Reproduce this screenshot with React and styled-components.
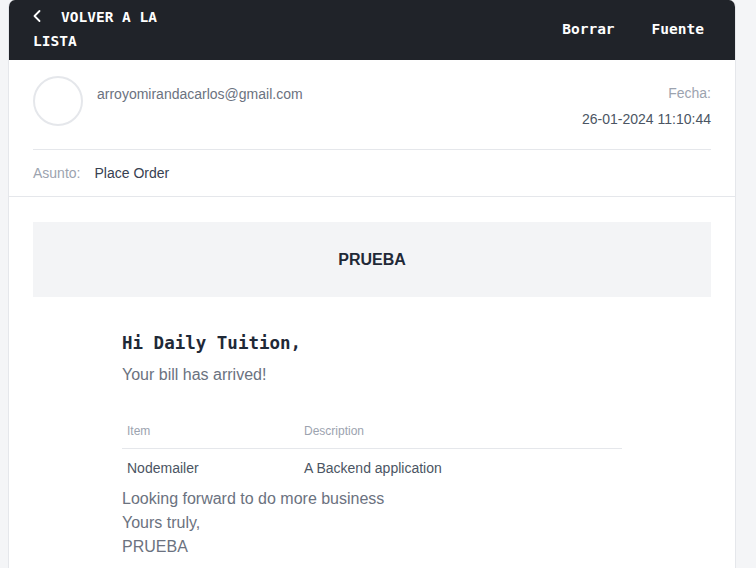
import styled, { createGlobalStyle } from "styled-components";
import { ChevronLeft } from "lucide-react";

const GlobalStyle = createGlobalStyle`
    body{
        margin: 0;
        background-color: #F4F5F7;
        font-family: "Liberation Sans", Arial, sans-serif;
    }
`;

export default function App () {
    return(
        <>
            <GlobalStyle/>
            <Page>
                <Card>
                    <TopBar>
                        <BackLink>
                            <ChevronLeft size={20} strokeWidth={2.2} />
                            VOLVER A LA LISTA
                        </BackLink>
                        <Actions>
                            <ActionButton>Borrar</ActionButton>
                            <ActionButton>Fuente</ActionButton>
                        </Actions>
                    </TopBar>
                    <Info>
                        <MetaRow>
                            <Sender>
                                <Avatar/>
                                <p>arroyomirandacarlos@gmail.com</p>
                            </Sender>
                            <DateBox>
                                <span className="label">Fecha:</span>
                                <span className="value">26-01-2024 11:10:44</span>
                            </DateBox>
                        </MetaRow>
                        <Subject>
                            <span className="label">Asunto:</span>
                            <span>Place Order</span>
                        </Subject>
                    </Info>
                    <Body>
                        <Banner>PRUEBA</Banner>
                        <Mail>
                            <h2>Hi Daily Tuition,</h2>
                            <p>Your bill has arrived!</p>
                            <Table>
                                <thead>
                                    <tr>
                                        <th className="first">Item</th>
                                        <th>Description</th>
                                    </tr>
                                </thead>
                                <tbody>
                                    <tr>
                                        <td>Nodemailer</td>
                                        <td>A Backend application</td>
                                    </tr>
                                </tbody>
                            </Table>
                            <Outro>
                                Looking forward to do more business<br/>
                                Yours truly,<br/>
                                PRUEBA
                            </Outro>
                        </Mail>
                    </Body>
                </Card>
            </Page>
        </>
    )
}

const Page = styled.div`
    padding: 0 20px 0 8px;
    min-height: 568px;
    box-sizing: border-box;
`;

const Card = styled.div`
    width: 728px;
    min-height: 568px;
    box-sizing: border-box;
    background-color: #FFFFFF;
    border: 1px solid #E5E7EB;
    border-top: 0;
    border-radius: 7px 7px 0 0;
    overflow: hidden;
`;

const TopBar = styled.div`
    height: 60px;
    box-sizing: border-box;
    background-color: #202329;
    display: flex;
    justify-content: space-between;
    align-items: flex-start;
    padding: 5px 31px 0 24px;
    font-family: "DejaVu Sans Mono", "Liberation Mono", monospace;
    font-weight: 700;
    font-size: 14.5px;
    color: #FFFFFF;
`;

const BackLink = styled.div`
    width: 140px;
    line-height: 24px;
    cursor: pointer;

    svg{
        vertical-align: -4px;
        margin-left: -6px;
        margin-right: 14px;
    }
`;

const Actions = styled.div`
    display: flex;
    gap: 37px;
    height: 48px;
    align-items: center;
`;

const ActionButton = styled.span`
    cursor: pointer;
`;

const Info = styled.div`
    padding: 0 24px;
    border-bottom: 1px solid #E5E7EB;
`;

const MetaRow = styled.div`
    height: 90px;
    box-sizing: border-box;
    padding-top: 16px;
    display: flex;
    justify-content: space-between;
    border-bottom: 1px solid #E5E7EB;
`;

const Sender = styled.div`
    display: flex;
    gap: 14px;
    align-items: flex-start;

    p{
        margin: 8px 0 0;
        font-size: 14px;
        line-height: 20px;
        color: #6B7280;
    }
`;

const Avatar = styled.div`
    width: 50px;
    height: 50px;
    box-sizing: border-box;
    border-radius: 50%;
    border: 2px solid #E5E7EB;
`;

const DateBox = styled.div`
    display: flex;
    flex-direction: column;
    align-items: flex-end;
    padding-top: 7px;
    font-size: 14px;
    line-height: 20px;

    .label{
        color: #9CA3AF;
    }
    .value{
        margin-top: 6px;
        color: #4B5563;
    }
`;

const Subject = styled.div`
    height: 46px;
    display: flex;
    align-items: center;
    gap: 14px;
    font-size: 14px;
    color: #374151;

    .label{
        color: #9CA3AF;
    }
`;

const Body = styled.div`
    padding: 25px 24px;
`;

const Banner = styled.div`
    height: 75px;
    background-color: #F3F4F6;
    display: flex;
    align-items: center;
    justify-content: center;
    font-weight: 700;
    font-size: 16px;
    color: #1F2937;
`;

const Mail = styled.div`
    width: 500px;
    margin: 0 auto;

    h2{
        margin: 34px 0 8px;
        font-family: "DejaVu Sans Mono", "Liberation Mono", monospace;
        font-size: 17.5px;
        line-height: 24px;
        font-weight: 700;
        color: #1F2937;
    }

    p{
        margin: 0;
        font-size: 16px;
        line-height: 24px;
        color: #6B7280;
    }
`;

const Table = styled.table`
    width: 100%;
    margin-top: 27px;
    border-collapse: collapse;
    text-align: left;

    th{
        padding: 8px 5px;
        font-size: 12px;
        line-height: 18px;
        font-weight: 400;
        color: #9CA3AF;
        border-bottom: 1px solid #E5E7EB;
    }
    th.first{
        width: 167px;
    }
    td{
        padding: 9px 5px;
        font-size: 14px;
        line-height: 20px;
        color: #4B5563;
    }
`;

const Outro = styled.div`
    font-size: 16px;
    line-height: 24px;
    color: #6B7280;
`;
